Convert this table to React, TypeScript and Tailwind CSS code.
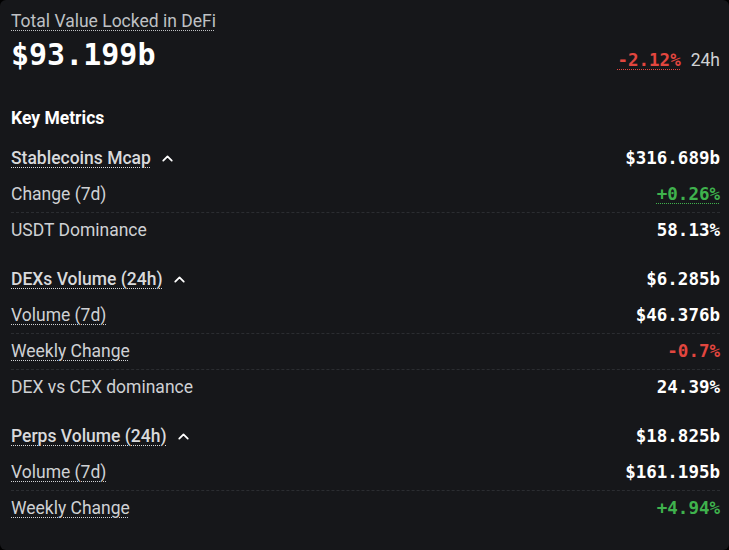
import { ChevronUp } from "lucide-react";

type Tone = "up" | "down" | "plain";

interface SubRow {
    label: string;
    value: string;
    tone?: Tone;
    tip?: boolean;
    valueTip?: boolean;
}

interface Group {
    title: string;
    value: string;
    rows: SubRow[];
}

const groups: Group[] = [
    {
        title: "Stablecoins Mcap",
        value: "$316.689b",
        rows: [
            { label: "Change (7d)", value: "+0.26%", tone: "up", valueTip: true },
            { label: "USDT Dominance", value: "58.13%" },
        ],
    },
    {
        title: "DEXs Volume (24h)",
        value: "$6.285b",
        rows: [
            { label: "Volume (7d)", value: "$46.376b", tip: true },
            { label: "Weekly Change", value: "-0.7%", tone: "down", tip: true },
            { label: "DEX vs CEX dominance", value: "24.39%" },
        ],
    },
    {
        title: "Perps Volume (24h)",
        value: "$18.825b",
        rows: [
            { label: "Volume (7d)", value: "$161.195b", tip: true },
            { label: "Weekly Change", value: "+4.94%", tone: "up", tip: true },
        ],
    },
];

const mono = "font-['DejaVu_Sans_Mono',monospace]";
const dotted = "underline decoration-dotted underline-offset-[3px] decoration-1";

function toneClass(tone?: Tone) {
    if (tone === "up") return "text-[#3fb24d]";
    if (tone === "down") return "text-[#e2463f]";
    return "text-white";
}

export default function App() {
    return (
        <div className="w-[729px] h-[550px] bg-black font-['Roboto',sans-serif]">
            <div className="w-full h-full bg-[#16171a] rounded-md pt-[9px] pl-[11px] pr-[9px]">
                <div className={`h-6 leading-6 text-[17.5px] text-[#bfc1c4] ${dotted}`}>
                    Total Value Locked in DeFi
                </div>
                <div className="mt-[4px] h-[36px] flex items-center justify-between">
                    <span className={`${mono} font-bold text-[30px] leading-[36px] text-white`}>$93.199b</span>
                    <div className="flex items-center gap-[10px] mt-[10px]">
                        <span className={`${mono} font-bold text-[17.5px] text-[#e2463f] ${dotted}`}>-2.12%</span>
                        <span className="text-[17.5px] text-[#cfd1d4]">24h</span>
                    </div>
                </div>

                <h2 className="mt-[33px] h-6 leading-6 text-[17.5px] font-bold text-white">Key Metrics</h2>

                <div className="mt-[10px] flex flex-col gap-[13px]">
                    {groups.map((group) => (
                        <div key={group.title} className="flex flex-col">
                            <div className="h-9 flex items-center justify-between">
                                <div className="flex items-center gap-[8px]">
                                    <span className={`text-[17.5px] font-medium text-[#d9dadc] ${dotted}`}>{group.title}</span>
                                    <ChevronUp size={17} strokeWidth={2.5} className="text-white" />
                                </div>
                                <span className={`${mono} font-bold text-[17.5px] text-white`}>{group.value}</span>
                            </div>
                            {group.rows.map((row, idx) => (
                                <div
                                    key={row.label}
                                    className={`h-9 flex items-center justify-between ${idx > 0 ? "border-t border-dashed border-[#2b2d31]" : ""}`}
                                >
                                    <span className={`text-[17.5px] text-[#cfd1d4] ${row.tip ? dotted : ""}`}>{row.label}</span>
                                    <span className={`${mono} font-bold text-[17.5px] ${toneClass(row.tone)} ${row.valueTip ? dotted : ""}`}>
                                        {row.value}
                                    </span>
                                </div>
                            ))}
                        </div>
                    ))}
                </div>
            </div>
        </div>
    );
}
